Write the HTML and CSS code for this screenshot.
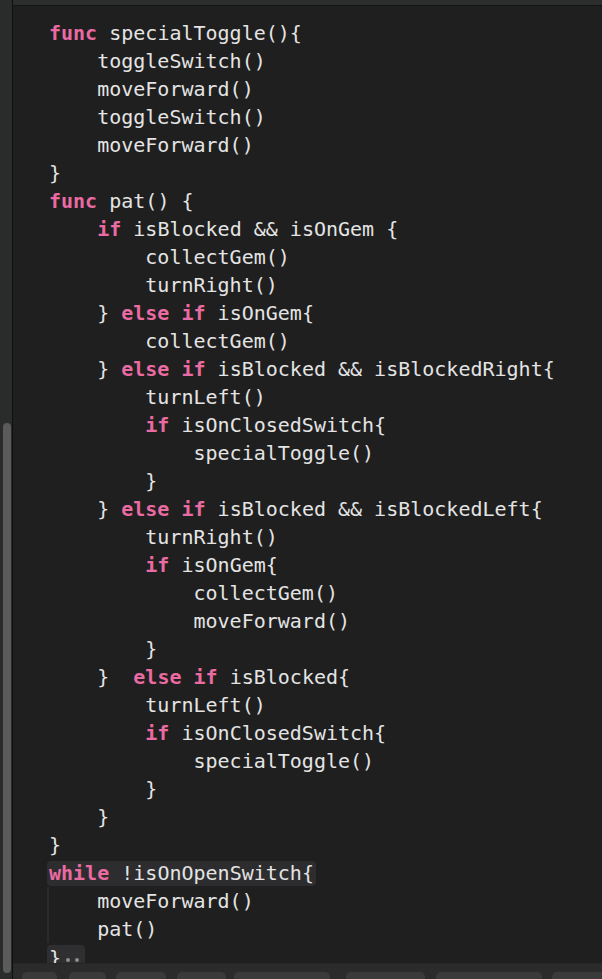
FILE: index.html
```html
<!DOCTYPE html>
<html>
<head>
<meta charset="utf-8">
<link rel="stylesheet" href="styles.css">
</head>
<body>
<div class="app">
  <div class="gutter"><div class="thumb"></div></div>
  <div class="main">
    <div class="topbar"></div>
    <div class="editor">
      <div class="ln"><span class="kw">func</span> specialToggle(){</div>
      <div class="ln">    toggleSwitch()</div>
      <div class="ln">    moveForward()</div>
      <div class="ln">    toggleSwitch()</div>
      <div class="ln">    moveForward()</div>
      <div class="ln">}</div>
      <div class="ln"><span class="kw">func</span> pat() {</div>
      <div class="ln">    <span class="kw">if</span> isBlocked &amp;&amp; isOnGem {</div>
      <div class="ln">        collectGem()</div>
      <div class="ln">        turnRight()</div>
      <div class="ln">    } <span class="kw">else if</span> isOnGem{</div>
      <div class="ln">        collectGem()</div>
      <div class="ln">    } <span class="kw">else if</span> isBlocked &amp;&amp; isBlockedRight{</div>
      <div class="ln">        turnLeft()</div>
      <div class="ln">        <span class="kw">if</span> isOnClosedSwitch{</div>
      <div class="ln">            specialToggle()</div>
      <div class="ln">        }</div>
      <div class="ln">    } <span class="kw">else if</span> isBlocked &amp;&amp; isBlockedLeft{</div>
      <div class="ln">        turnRight()</div>
      <div class="ln">        <span class="kw">if</span> isOnGem{</div>
      <div class="ln">            collectGem()</div>
      <div class="ln">            moveForward()</div>
      <div class="ln">        }</div>
      <div class="ln">    }  <span class="kw">else if</span> isBlocked{</div>
      <div class="ln">        turnLeft()</div>
      <div class="ln">        <span class="kw">if</span> isOnClosedSwitch{</div>
      <div class="ln">            specialToggle()</div>
      <div class="ln">        }</div>
      <div class="ln">    }</div>
      <div class="ln">}</div>
      <div class="ln"><span class="scope-head"><span class="kw">while</span> !isOnOpenSwitch{</span></div>
      <div class="scope-body">
        <div class="ln">    moveForward()</div>
        <div class="ln">    pat()</div>
      </div>
      <div class="ln"><span class="scope-end">}<span class="dots"><i></i><i></i></span></span></div>
    </div>
    <div class="bottombar">
      <div class="key"></div>
      <div class="key"></div>
      <div class="key"></div>
      <div class="key"></div>
      <div class="key"></div>
      <div class="key"></div>
      <div class="key"></div>
      <div class="key"></div>
    </div>
  </div>
</div>
</body>
</html>
```
FILE: styles.css
```css
html, body {
  margin: 0;
  padding: 0;
  background: #1f1f1f;
}
.app {
  width: 602px;
  height: 979px;
  display: flex;
  overflow: hidden;
}
.gutter {
  width: 13px;
  flex: none;
  background: #2a2b2b;
  border-right: 1px solid #0f0f0f;
  display: flex;
  flex-direction: column;
  padding-top: 423px;
  padding-bottom: 6px;
  box-sizing: border-box;
  align-items: center;
}
.thumb {
  width: 8px;
  flex: 1;
  background: #5b5b5b;
  border-radius: 4px;
  margin-left: 1px;
}
.main {
  flex: 1;
  display: flex;
  flex-direction: column;
  min-width: 0;
}
.topbar {
  height: 5px;
  flex: none;
  background: #2c2e2e;
  border-bottom: 1px solid #141414;
}
.editor {
  flex: 1;
  overflow: hidden;
  padding-top: 13px;
  padding-left: 36px;
  background: #1f1f1f;
  font-family: "DejaVu Sans Mono", "Liberation Mono", monospace;
  font-size: 20px;
  color: #e4e4e4;
}
.ln {
  height: 28px;
  line-height: 28px;
  white-space: pre;
}
.kw {
  color: #ea6aa2;
  font-weight: bold;
}
.scope-head {
  display: inline-block;
  height: 25px;
  line-height: 25px;
  margin-top: 2px;
  padding: 0 2px;
  margin-left: -2px;
  background: #2d2d2f;
  border-radius: 4px;
  vertical-align: top;
}
.scope-body {
  margin-left: -2px;
  padding-left: 0;
  border-left: 2px solid #2b2b2d;
}
.scope-end {
  display: inline-flex;
  align-items: center;
  height: 25px;
  margin-top: 2px;
  padding: 0 6px 0 2px;
  margin-left: -2px;
  background: #2f2f31;
  border-radius: 4px;
  vertical-align: top;
}
.dots {
  display: inline-flex;
  gap: 5px;
  margin-left: 5px;
  margin-top: 4px;
}
.dots i {
  display: block;
  width: 4px;
  height: 4px;
  border-radius: 50%;
  background: #8d8d8f;
}
.bottombar {
  height: 16px;
  flex: none;
  background: #2b2b2c;
  border-top: 1px solid #262626;
  box-sizing: border-box;
  display: flex;
  align-items: flex-start;
  padding-top: 8px;
  overflow: hidden;
}
.key {
  height: 20px;
  flex: none;
  background: #3a3a3b;
  border-radius: 5px 5px 0 0;
}
.key:nth-child(1) { margin-left: 9px; width: 35px; }
.key:nth-child(2) { margin-left: 12px; width: 37px; }
.key:nth-child(3) { margin-left: 10px; width: 50px; }
.key:nth-child(4) { margin-left: 11px; width: 49px; }
.key:nth-child(5) { margin-left: 8px; width: 96px; }
.key:nth-child(6) { margin-left: 16px; width: 79px; }
.key:nth-child(7) { margin-left: 11px; width: 106px; }
.key:nth-child(8) { margin-left: 10px; width: 80px; }
```
